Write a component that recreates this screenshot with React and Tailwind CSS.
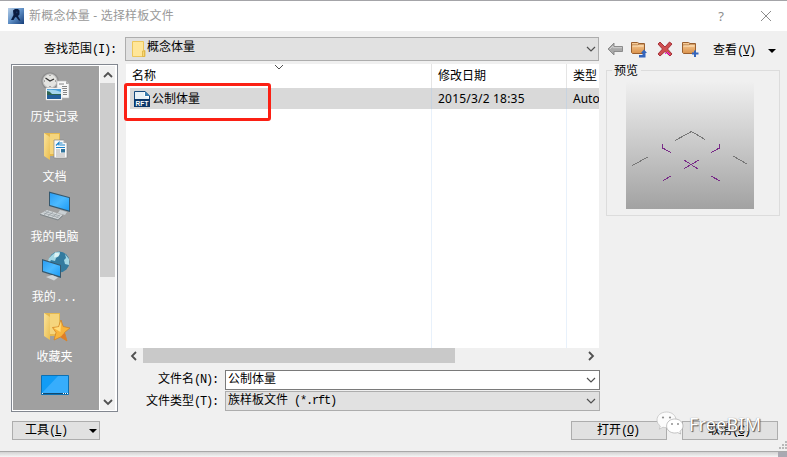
import { useId } from 'react';

const UI = 'font-["Liberation_Mono","Noto_Sans_CJK_SC",sans-serif]';
const LIST = 'font-["Noto_Sans","Noto_Sans_CJK_SC",sans-serif]';

// Hotkey suffix such as (N): in the narrow half-width face
function Key({ k, plain, end = '' }) {
  return (
    <span className="text-[12px] tracking-[-1.2px]">
      ({plain ? k : <span className="underline">{k}</span>}){end}
    </span>
  );
}

function Chevron({ dir = 'down', className = '', thick = 1.2 }) {
  const turn = { down: 'rotate-0', up: 'rotate-180', left: 'rotate-90', right: '-rotate-90' }[dir];
  return (
    <svg viewBox="0 0 10 10" className={`h-[10px] w-[10px] shrink-0 ${turn} ${className}`} fill="none" stroke="#505050" strokeWidth={thick}>
      <path d="M1 3l4 4 4-4" />
    </svg>
  );
}

function AppLogo() {
  return (
    <svg viewBox="0 0 16 16" className="h-4 w-4 shrink-0">
      <defs>
        <linearGradient id="logo-bg" x1="0" y1="0" x2="1" y2="1">
          <stop offset="0" stopColor="#b7cfe8" />
          <stop offset=".5" stopColor="#5d8dc4" />
          <stop offset="1" stopColor="#143c78" />
        </linearGradient>
      </defs>
      <rect width="16" height="16" fill="url(#logo-bg)" />
      <path d="M5 2.500L7 1h3l1.500 1.500v4L10 8l2.500 4.500H11L8 9l-1 .5-1.500 2.500H3l2.500-5z" fill="#0b1c40" />
      <path d="M8.500 3.500l1 .5-1 1.500z" fill="#2c5590" />
    </svg>
  );
}

function FolderBase() {
  const id = useId();
  return (
    <>
      <defs>
        <linearGradient id={id} x1="0" y1="0" x2="1" y2="1">
          <stop offset="0" stopColor="#fbe49b" />
          <stop offset="1" stopColor="#e9bd50" />
        </linearGradient>
      </defs>
      <path d="M4 2h16v23H4z" fill="#e4b84f" />
      <path d="M4 2l6 4v23l-6-4z" fill={`url(#${id})`} />
      <path d="M10 6V3h9v20h-9z" fill="#f5d57d" />
    </>
  );
}

function HistoryIcon() {
  return (
    <svg viewBox="0 0 32 32" className="h-8 w-8">
      <circle cx="10" cy="10" r="8.800" fill="#8d8d8d" />
      <circle cx="10" cy="10" r="7" fill="#e4e4e1" stroke="#c2c2c2" />
      <path d="M5.500 7l4.500 3 4-2" fill="none" stroke="#333" strokeWidth="1.300" />
      <path d="M10 4v1M10 15v1M4 10h1M15 10h1" stroke="#666" />
      <path d="M17 10h9l3 3v14H17z" fill="#f7f7f7" stroke="#bbb" strokeWidth=".6" />
      <path d="M26 10v3h3z" fill="#aaa" />
      <path d="M19 13h5M22 15.500h5M22 17.500h5M23 19.500h4M23 21.500h4M23 23.500h4" stroke="#777" strokeWidth=".9" />
      <path d="M6 17h16v12H6z" fill="#fff" stroke="#d2d2d2" strokeWidth=".5" />
      <path d="M7 18h14v10H7z" fill="#4da0d8" />
      <path d="M7 19q7-1 14 2v2H7z" fill="#a6d6ee" />
      <path d="M7 20q3 0 5 3h9v2H7z" fill="#2e6552" />
      <path d="M7 24h14v4H7z" fill="#245f9b" />
    </svg>
  );
}

function DocumentsIcon() {
  return (
    <svg viewBox="0 0 32 32" className="h-8 w-8">
      <FolderBase />
      <path d="M14 9h9.500L27 12v15H14z" fill="#fafafa" stroke="#888" strokeWidth=".7" />
      <path d="M23.500 9v3H27z" fill="#aaa" />
      <path d="M16 14.500l3-3v3M20 12h2.500M20 14h5M16 16.500h9" stroke="#1a84cc" fill="none" strokeWidth="1.200" />
      <path d="M16 19h4M16 21h4M16 23h9M16 25h9" stroke="#999" strokeWidth=".8" />
      <path d="M21 18h4v3.500h-4z" fill="#31749c" />
    </svg>
  );
}

function Screen({ id }) {
  return (
    <defs>
      <linearGradient id={id} x1="0" y1="0" x2="1" y2="1">
        <stop offset="0" stopColor="#2a9df4" />
        <stop offset=".5" stopColor="#4cbaff" />
        <stop offset="1" stopColor="#1c9cf6" />
      </linearGradient>
    </defs>
  );
}

function ComputerIcon() {
  return (
    <svg viewBox="0 0 32 32" className="h-8 w-8">
      <Screen id="scr-pc" />
      <path d="M9 .5l21 5.700V21L9 15z" fill="#35586e" />
      <path d="M10 2l19 5v12.500L10 14z" fill="url(#scr-pc)" />
      <path d="M20 19l7 2-2 3-7-2z" fill="#c9d0d4" />
      <path d="M7 19l16 5-5 4.500L0 23z" fill="#d2d7da" />
      <path d="M0 23l18 5.500v1L0 24zM18 28.500l5-4.500v1l-5 4.500z" fill="#7d8589" />
      <path d="M5 20.500l15 4.500M3.500 22l15 4.500M9 19.700l-5 4.300M13 21l-5 4M17 22.500l-5 4M20 23.500l-4 4" stroke="#8b9498" strokeWidth=".6" />
    </svg>
  );
}

function NetworkIcon() {
  return (
    <svg viewBox="0 0 32 32" className="h-8 w-8">
      <Screen id="scr-net" />
      <circle cx="19" cy="11" r="10.500" fill="#337b9f" />
      <path d="M12 4q4-4 8-3l-1 4-3 2-1 3-4-1-1 2-2-1q1-4 4-6zM25 3l4 5v6l-4-1-1-4 2-2z" fill="#a4d7e4" />
      <path d="M15 1.500l5 1-2 3-4 1z" fill="#ddf3f5" />
      <path d="M2 8l19 6v13L2 21z" fill="#35586e" />
      <path d="M3 9.500l17 5.300v10.500L3 20z" fill="url(#scr-net)" />
      <path d="M11 24l5 1.500v2l-5-1.500z" fill="#8d989d" />
      <path d="M6 26l6-2 6 2.500-4 3z" fill="#cfd5d8" />
    </svg>
  );
}

function FavoritesIcon() {
  return (
    <svg viewBox="0 0 32 32" className="h-8 w-8">
      <FolderBase />
      <path d="M21 9l2.200 6.500L30 17l-5.500 4.500L27 30l-6.500-4L14 29l2-7.500-3.500-5 6-.7z" fill="#f9b53b" stroke="#d18427" strokeWidth=".8" />
      <path d="M21 10l-.5 11-7-4 5.500-1z" fill="#ffdc7c" />
      <path d="M24.500 21.500L27 30l-6.500-4z" fill="#e07e27" />
    </svg>
  );
}

function DesktopIcon() {
  return (
    <svg viewBox="0 0 32 32" className="h-8 w-8">
      <path d="M1.500 4.500h27v19h-27z" fill="#119cf5" stroke="#0c70b3" />
      <path d="M2 22L18 5h10v17z" fill="#37adfc" />
      <path d="M2 22h26v1H2z" fill="#12496d" />
      <path d="M2 22h1v1H2zM23 22h1v1h-1zM25 22h1v1h-1zM27 22h1v1h-1z" fill="#fff" />
    </svg>
  );
}

const places = [
  { label: '历史记录', Icon: HistoryIcon },
  { label: '文档', Icon: DocumentsIcon },
  { label: '我的电脑', Icon: ComputerIcon },
  { label: '我的...', Icon: NetworkIcon },
  { label: '收藏夹', Icon: FavoritesIcon },
  { label: '', Icon: DesktopIcon },
];

function OrangeFolder({ children }) {
  return (
    <svg viewBox="0 0 17 17" className="h-[17px] w-[17px] shrink-0">
      <defs>
        <linearGradient id="orange" x1="0" y1="0" x2="0" y2="1">
          <stop offset="0" stopColor="#fbd19c" />
          <stop offset="1" stopColor="#d9914a" />
        </linearGradient>
      </defs>
      <path d="M.5 1.500h6l1.500 1h5.500v10H1.500l-1-1z" fill="url(#orange)" stroke="#9a6030" />
      <path d="M1 4h5.500l1.500-1h5" fill="none" stroke="#9a6030" strokeWidth=".8" />
      <path d="M1.500 5h11" stroke="#ffe6c2" />
      {children}
    </svg>
  );
}

function TitleBar() {
  return (
    <header className="flex h-[31px] shrink-0 items-center border-t border-[#a4a4a8] bg-white pl-2 pr-[15px]">
      <AppLogo />
      <h1 className={`ml-[5px] flex-1 whitespace-pre text-[12px] leading-4 tracking-[0.2px] text-[#999] ${LIST}`}>
        新概念体量 - 选择样板文件
      </h1>
      <span className={`mr-[36px] text-[13px] leading-4 text-[#8c8c8c] ${LIST}`}>?</span>
      <svg viewBox="0 0 12 12" className="h-3 w-3" stroke="#8c8c8c" fill="none">
        <path d="M1 1l10 10M11 1L1 11" />
      </svg>
    </header>
  );
}

function AddressRow() {
  return (
    <div className="flex h-[33px] pt-[6px]">
      <div className="w-[125px] shrink-0 pl-[44px] text-[12px] leading-[26px]">
        查找范围<Key k="I" plain end=":" />
      </div>
      <div className="flex h-6 w-[474px] shrink-0 items-center border border-[#adadad] bg-[#e1e1e1] pl-[6px] pr-[2px]">
        <svg viewBox="0 0 14 16" className="h-4 w-[14px]">
          <path d="M.5.500h11v9h1.500v6H.5z" fill="#ffe699" stroke="#ecc65c" />
          <path d="M10.500 10h2v5.500h-2z" fill="#f8d775" stroke="#d9ad3b" strokeWidth=".7" />
        </svg>
        <span className="ml-px flex-1 pb-[2px] text-[12px] leading-4">概念体量</span>
        <Chevron />
      </div>
      <div className="flex h-6 flex-1 items-center pl-[8px]">
        <svg viewBox="0 0 16 14" className="h-[14px] w-4">
          <path d="M1 7l6-6v3.500h8.500v5H7V13z" fill="#a9a9a9" stroke="#858585" strokeWidth=".9" />
          <path d="M3 7l3-3v1.700h9" fill="none" stroke="#cfcfcf" />
        </svg>
        <span className="ml-[8px] flex">
          <OrangeFolder>
            <path d="M8 14h3.500v-2H10l3-3.500 3 3.500h-1.500v4.500H8z" fill="#3465bc" />
          </OrangeFolder>
        </span>
        <svg viewBox="0 0 16 16" className="ml-[9px] h-4 w-4">
          <path d="M1 3l2-2 5 5 4.500-5L15 3l-4.500 5 4.500 5-2 2-5-4.500L3 15l-2-2 4.500-5z" fill="#cf4f50" stroke="#9f2730" strokeWidth=".9" />
          <path d="M10 11h1v1h1v1h-1v-1h-1zM8 12h1v1H8zM12 13h1v1h-1z" fill="#f0f" />
        </svg>
        <span className="ml-[9px] flex">
          <OrangeFolder>
            <path d="M10 11.500h2v-2h2v2h2.500v2H14V16h-2v-2.500h-2z" fill="#3465bc" />
          </OrangeFolder>
        </span>
        <span className="ml-[14px] pt-[3px] text-[12px] leading-4">
          查看<Key k="V" />
        </span>
        <svg viewBox="0 0 8 4" className="ml-[13px] mt-[3px] h-1 w-2">
          <path d="M0 0h8L4 4z" />
        </svg>
      </div>
    </div>
  );
}

function PlacesBar() {
  return (
    <aside className="flex h-[348px] w-[107px] shrink-0 border border-[#828790] bg-white p-px">
      <nav className="flex w-[86px] shrink-0 flex-col overflow-hidden bg-[#a0a0a0] pt-[5px]">
        {places.map(({ label, Icon }, i) => (
          <div key={i} className="flex h-[60px] shrink-0 flex-col items-center">
            <Icon />
            <span className="mr-[3px] mt-[7px] text-[12px] leading-4 text-white">{label}</span>
          </div>
        ))}
      </nav>
      <div className="ml-px flex w-[15px] flex-col items-center bg-[#f0f0f0]">
        <div className="flex h-[17px] shrink-0 items-center">
          <Chevron dir="up" thick={1.8} />
        </div>
        <div className="h-[194px] w-full shrink-0 bg-[#cdcdcd]" />
        <div className="flex flex-1 items-end pb-[3px]">
          <Chevron thick={1.8} />
        </div>
      </div>
    </aside>
  );
}

function RftIcon() {
  return (
    <svg viewBox="0 0 16 16" className="h-4 w-4 shrink-0">
      <path d="M.5.500H11L15.500 5v10.500H.5z" fill="#fff" stroke="#164a7d" />
      <path d="M1 1h9v4l5 2v2H1z" fill="#e8f1f6" />
      <path d="M11 0l5 5h-5z" fill="#377cae" />
      <path d="M0 8h16v8H0z" fill="#0b3769" />
      <text x="1.500" y="14.500" fontSize="6.500" fontWeight="700" fontFamily="Liberation Sans" fill="#fff" textLength="13">RFT</text>
    </svg>
  );
}

function FileList() {
  return (
    <div className={`relative flex h-[284px] w-[473px] flex-col bg-white text-[12px] ${LIST}`}>
      <div className="flex h-6 shrink-0 leading-6">
        <div className="relative w-[305px] shrink-0 pl-[6px]">
          名称
          <Chevron thick={1} className="absolute left-[148px] top-[-2px]" />
        </div>
        <div className="w-[135px] shrink-0 border-l border-[#e5e5e5] pl-[6px]">修改日期</div>
        <div className="flex-1 overflow-hidden whitespace-nowrap border-l border-[#e5e5e5] pl-[6px]">类型</div>
      </div>
      <div className="ml-1 flex h-[21px] shrink-0 bg-[#d9d9d9] leading-[21px]">
        <div className="flex w-[301px] shrink-0 items-center pl-1">
          <RftIcon />
          <span className="ml-[2px]">公制体量</span>
        </div>
        <div className="w-[135px] shrink-0 border-l border-[#c7d3e0] pl-[6px] tracking-[0.2px]">2015/3/2 18:35</div>
        <div className="flex-1 overflow-hidden whitespace-nowrap border-l border-[#c7d3e0] pl-[6px]">Auto</div>
      </div>
      <div className="flex flex-1">
        <div className="w-[305px]" />
        <div className="w-[135px] border-l border-[#e8f1fb]" />
        <div className="flex-1 border-l border-[#e8f1fb]" />
      </div>
      <div className="absolute left-[-2px] top-[19px] h-[38px] w-[147px] rounded-[3px] border-3 border-[#fb2014]" />
    </div>
  );
}

function BrowserPane() {
  return (
    <main className="ml-2 w-[474px] shrink-0">
      <FileList />
      <div className="flex h-[15px] w-[473px] items-center">
        <Chevron dir="left" thick={1.8} className="ml-[3px] mr-1" />
        <div className="h-[15px] w-[312px] bg-[#c9c9c9]" />
        <Chevron dir="right" thick={1.8} className="ml-auto mr-[3px]" />
      </div>
      <div className="mt-[7px] flex h-5 items-center">
        <div className="w-[99px] shrink-0 pl-[32px] text-[12px] leading-5">
          文件名<Key k="N" plain end=":" />
        </div>
        <div className="flex h-5 w-[375px] items-center border border-[#7a7a7a] bg-white pl-[2px] pr-[3px] text-[12px]">
          <span className="flex-1 leading-4">公制体量</span>
          <Chevron />
        </div>
      </div>
      <div className="mt-px flex h-5 items-center">
        <div className="w-[99px] shrink-0 pl-[20px] pt-[2px] text-[12px] leading-5">
          文件类型<Key k="T" plain end=":" />
        </div>
        <div className="flex h-5 w-[375px] items-center border border-[#adadad] bg-[#e1e1e1] pl-[2px] pr-[3px] text-[12px]">
          <span className="flex-1 whitespace-pre leading-4">
            族样板文件<span className="text-[12px] tracking-[-1.2px]"> (*.rft)</span>
          </span>
          <Chevron />
        </div>
      </div>
    </main>
  );
}

function Preview() {
  return (
    <section className="ml-[6px] mt-[6px] h-[146px] w-[174px] border border-[#dcdcdc] pl-[19px]">
      <h2 className="ml-[-14px] mt-[-8px] h-4 w-[29px] whitespace-nowrap bg-[#f0f0f0] pl-[2px] text-[12px] leading-[18px]">预览</h2>
      <svg viewBox="0 0 128 128" className="mt-[2px] h-32 w-32" fill="none" shapeRendering="crispEdges">
        <defs>
          <linearGradient id="sky" x1="0" y1="0" x2="0" y2="1">
            <stop offset="0" stopColor="#f0f0f0" />
            <stop offset="1" stopColor="#a2a2a2" />
          </linearGradient>
        </defs>
        <path d="M0 0h128v128H0z" fill="url(#sky)" />
        <path d="M49 59.500L65.500 50.500 79 58.500M6.500 84.500l15-8.500M107 75l14 8" stroke="#777" />
        <path d="M36.500 63v4l8.500 4.500M93.500 63v4l-8.500 4.500M58 79l14 9M58 87.500l15-8.500M37 99.500l8-4.500M85 95l9 5" stroke="#792c88" />
      </svg>
    </section>
  );
}

function Watermark() {
  return (
    <div className="absolute left-[656px] top-[411px] flex items-start">
      <svg viewBox="0 0 28 24" className="h-6 w-7">
        <path d="M10.500 1C5 1 1 4.500 1 9c0 2.500 1.300 4.600 3.300 6l-1 3.200 3.700-2c1.100.3 2.300.5 3.500.5 5.500 0 9.500-3.300 9.500-7.700S16 1 10.500 1z" fill="#fbfbfb" stroke="#bdbdbd" strokeWidth=".7" />
        <path d="M18.800 8c-4.600 0-8.200 3-8.200 7s3.600 7 8.200 7c1 0 2-.2 2.900-.4l3 1.400-.8-2.600c1.900-1.300 3.100-3.200 3.100-5.400 0-4-3.600-7-8.200-7z" fill="#fff" stroke="#aaa" strokeWidth=".7" />
        <g fill="#8f8f8f">
          <circle cx="7" cy="6.500" r="1.100" />
          <circle cx="14" cy="6.500" r="1.100" />
          <circle cx="16" cy="13" r="1" />
          <circle cx="22" cy="13" r="1" />
        </g>
      </svg>
      <span className='ml-[5px] mt-[3px] font-["Noto_Sans",sans-serif] text-[18px] leading-5 tracking-[0.2px] text-white [text-shadow:1px_1px_1px_#555,0_0_1px_#777]'>
        FreeBIM
      </span>
    </div>
  );
}

function Actions() {
  const button = 'flex h-[19px] items-center border border-[#adadad] bg-[#e1e1e1] text-[12px] leading-4';
  return (
    <div className="ml-3 mt-[9px] flex">
      <button className={`${button} w-[88px] pl-[12px]`}>
        <span>
          工具<Key k="L" />
        </span>
        <svg viewBox="0 0 8 4" className="ml-auto mr-[2px] h-1 w-2">
          <path d="M0 0h8L4 4z" />
        </svg>
      </button>
      <button className={`${button} ml-[471px] w-24 justify-center pr-[2px]`}>
        <span>
          打开<Key k="O" />
        </span>
      </button>
      <button className={`${button} ml-[15px] w-24 justify-center pr-[2px]`}>
        <span>
          取消<Key k="C" />
        </span>
      </button>
    </div>
  );
}

function App() {
  return (
    <div className={`relative flex h-[457px] w-[787px] flex-col overflow-hidden bg-[#f0f0f0] text-black ${UI}`}>
      <TitleBar />
      <div className="flex h-[420px] shrink-0 flex-col">
        <AddressRow />
        <div className="flex h-[348px] shrink-0 pl-[11px]">
          <PlacesBar />
          <BrowserPane />
          <Preview />
        </div>
        <Actions />
      </div>
      <footer className="flex h-[6px] shrink-0 border-t border-[#a8a8a8]">
        <div className="flex-1 bg-linear-to-b from-[#d2d2d2] to-[#f6f6f6]" />
        <div className="w-[9px] bg-[#a9a9b2]" />
      </footer>
      <svg viewBox="0 0 8 8" className="absolute bottom-[8px] right-0 h-2 w-2" fill="#b8b8b8">
        <path d="M6 0h2v2H6zM3 3h2v2H3zM6 3h2v2H6zM0 6h2v2H0zM3 6h2v2H3zM6 6h2v2H6z" />
      </svg>
      <Watermark />
    </div>
  );
}

export default App;
